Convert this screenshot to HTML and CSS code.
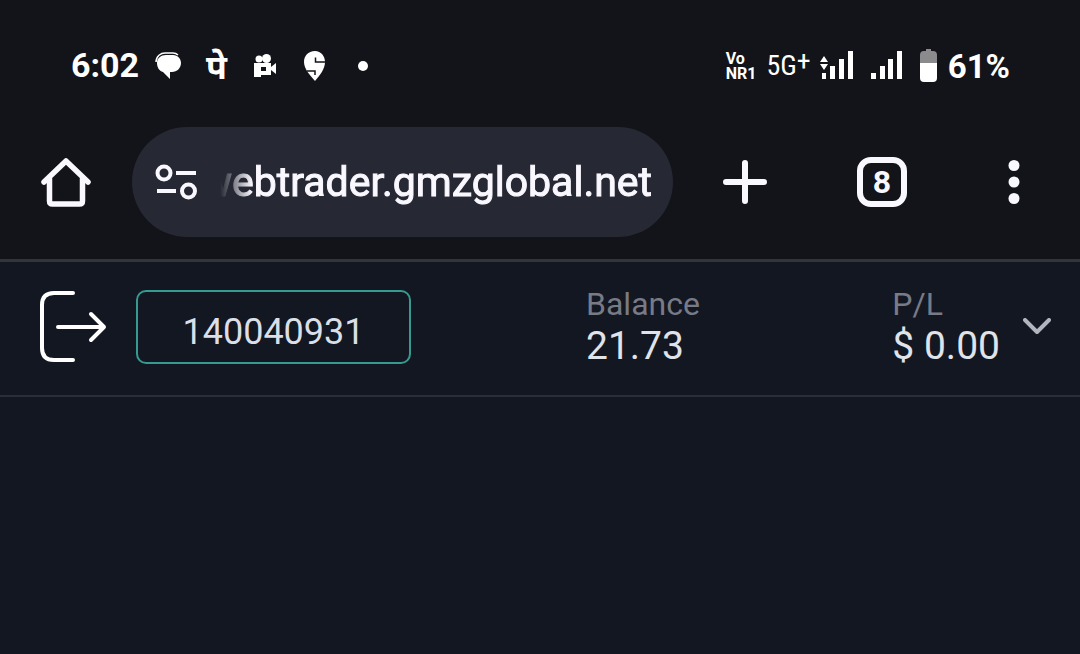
FILE: index.html
```html
<!DOCTYPE html>
<html lang="en">
<head>
<meta charset="utf-8">
<meta name="viewport" content="width=device-width, initial-scale=1">
<title>Webtrader</title>
<link rel="stylesheet" href="styles.css">
</head>
<body>
<div class="status-bar">
  <div class="status-left">
    <time class="clock">6:02</time>
    <svg class="icon-chat" width="27" height="27" viewBox="0 0 27 27" aria-hidden="true">
      <path d="M1 10C1 4 6 1 10 1h8c2 0 4 1 5 2" fill="none" stroke="#fff" stroke-width="1.500"/>
      <path d="M11 3h7c5 0 8 4 8 8 0 5-4 9-9 9h-2v7l-7-7C4 19 2 15 2 11c0-5 4-8 9-8z" fill="#fff"/>
    </svg>
    <span class="pay-mark">पे</span>
    <svg class="icon-camera" width="23" height="23" viewBox="0 0 23 23" aria-hidden="true">
      <circle cx="5" cy="5" r="3.500" fill="#fff"/><circle cx="12.500" cy="4.500" r="4.500" fill="#fff"/>
      <path fill="#fff" fill-rule="evenodd" d="M0 9h17v4l5-4v11l-5-4v5H7v2H0zM7 13v4h5v-4z"/>
    </svg>
    <svg class="icon-pin" width="22" height="30" viewBox="0 0 22 30" aria-hidden="true">
      <path fill="#fff" d="M11 0C4 0 0 5 0 11c0 7 6 13 11 19 5-6 10-12 10-19C21 5 17 0 11 0z"/>
      <path d="M11.500 6.500V11H22M3 20h8v4" stroke="#131419" stroke-width="1.500" fill="none"/>
    </svg>
    <span class="more-dot"></span>
  </div>
  <div class="status-right">
    <span class="vonr"><span>Vo</span><span>NR1</span></span>
    <span class="network">5G<sup>+</sup></span>
    <svg class="signal-one" width="33" height="29" viewBox="0 0 33 29" fill="#fff" aria-hidden="true">
      <path d="M0 11l4-6 4 6zM0 13h8l-4 6zM2 22h4v6H2zM10 15h5v13h-5zM19 8h5v20h-5zM28 0h5v28h-5z"/>
    </svg>
    <svg class="signal-two" width="31" height="29" viewBox="0 0 31 29" fill="#fff" aria-hidden="true">
      <path d="M0 22h5v6H0zM9 15h5v13H9zM17 8h5v20h-5zM26 0h5v28h-5z"/>
    </svg>
    <svg class="battery" width="17" height="33" viewBox="0 0 17 33" aria-hidden="true">
      <path d="M6 0h5v2h2q4 0 4 4v8H0V6q0-4 4-4h2z" fill="#8b8b8e"/><path d="M0 14h17v15q0 4-4 4H4q-4 0-4-4z" fill="#fff"/>
    </svg>
    <span class="percent">61%</span>
  </div>
</div>

<div class="toolbar">
  <button class="icon-button home" aria-label="Home">
    <svg width="50" height="50" viewBox="0 0 50 50" fill="none" stroke="#faf8ff" stroke-width="5.500" stroke-linecap="round" stroke-linejoin="round">
      <path d="M3 25L25 4l22 21"/><path d="M8.500 22v22q0 3 3 3h27q3 0 3-3V22"/>
    </svg>
  </button>
  <div class="address-bar">
    <button class="icon-button site-info" aria-label="Site information">
      <svg width="42" height="36" viewBox="0 0 42 36" fill="none" stroke="#faf8ff" stroke-width="4">
        <circle cx="9" cy="9" r="6.500"/><circle cx="33.500" cy="27" r="6.500"/><path d="M21 9h20M2 27h19"/>
      </svg>
    </button>
    <input class="url" type="text" aria-label="Address" value="webtrader.gmzglobal.net">
  </div>
  <button class="icon-button new-tab" aria-label="New tab">
    <svg width="44" height="44" viewBox="0 0 44 44" fill="none" stroke="#faf8ff" stroke-width="6" stroke-linecap="round"><path d="M22 3v38M3 22h38"/></svg>
  </button>
  <button class="tabs" aria-label="8 open tabs">8</button>
  <button class="icon-button menu" aria-label="Menu">
    <svg width="12" height="44" viewBox="0 0 12 44" fill="#faf8ff"><circle cx="6" cy="5.500" r="5.500"/><circle cx="6" cy="22" r="5.500"/><circle cx="6" cy="38.500" r="5.500"/></svg>
  </button>
</div>

<header class="account-bar">
  <button class="icon-button" aria-label="Log out">
    <svg width="67" height="72" viewBox="0 0 67 72" fill="none" stroke="#fff" stroke-width="4" stroke-linecap="round" stroke-linejoin="round">
      <path d="M33 2H14Q2 2 2 14v43q0 12 12 12h19M18 36h46M51 23l13 13-13 13"/>
    </svg>
  </button>
  <button class="account">140040931</button>
  <dl class="stats">
    <div><dt>Balance</dt><dd>21.73</dd></div>
    <div><dt>P/L</dt><dd>$ 0.00</dd></div>
  </dl>
  <button class="icon-button" aria-label="Show details">
    <svg width="28" height="18" viewBox="0 0 28 18" fill="none" stroke="#b2b5be" stroke-width="4" stroke-linecap="round" stroke-linejoin="round"><path d="M2 2l12 12L26 2"/></svg>
  </button>
</header>
<main class="workspace"></main>
</body>
</html>
```
FILE: styles.css
```css
* { box-sizing: border-box; }
body {
  margin: 0;
  min-height: 100vh;
  display: flex;
  flex-direction: column;
  background: #131722;
  color: #fff;
  font-family: Roboto, sans-serif;
}
button, input { font: inherit; color: inherit; }
svg { display: block; flex: none; }
.icon-button { padding: 0; border: 0; background: none; flex: none; }

.status-bar {
  display: flex;
  justify-content: space-between;
  align-items: center;
  height: 127px;
  padding: 4px 70px 0 71px;
  background: #131419;
}
.status-left, .status-right { display: flex; align-items: center; }
.clock { padding-bottom: 2px; font-size: 34px; font-weight: 700; line-height: 40px; }
.icon-chat { margin-left: 16px; }
.pay-mark {
  margin-left: 24px;
  padding-top: 10px;
  font: 700 34px/40px "Noto Sans Devanagari", "Noto Sans", sans-serif;
}
.icon-camera { margin-left: 27px; }
.icon-pin { margin-left: 27px; }
.more-dot { width: 10px; height: 10px; margin-left: 32px; border-radius: 50%; background: #fff; }
.vonr {
  display: flex;
  flex-direction: column;
  font-size: 16px;
  font-weight: 700;
  line-height: 15px;
}
.network {
  margin-left: 10px;
  font: 28px/34px "Roboto Condensed", "Liberation Sans Narrow", Roboto, sans-serif;
}
.network sup { font-size: 28px; line-height: 0; vertical-align: 5px; }
.signal-one { margin-left: 9px; }
.signal-two { margin-left: 18px; }
.battery { margin-left: 18px; }
.percent { margin-left: 11px; padding-top: 2px; font-size: 33px; font-weight: 700; line-height: 40px; }

.toolbar {
  display: flex;
  align-items: center;
  padding: 0 60px 22px 41px;
  background: #131419;
  border-bottom: 3px solid #33353a;
}
.address-bar {
  flex: 1;
  min-width: 0;
  display: flex;
  align-items: center;
  height: 110px;
  margin-left: 41px;
  padding: 0 21px 0 23px;
  border-radius: 55px;
  background: #262833;
}
.url {
  flex: 1;
  min-width: 0;
  height: 60px;
  margin-left: 23px;
  padding: 0;
  border: 0;
  outline: 0;
  background: none;
  color: #faf8ff;
  direction: rtl;
  font-size: 41px;
  -webkit-mask-image: linear-gradient(to right, transparent, #000 32px);
  mask-image: linear-gradient(to right, transparent, #000 32px);
  -webkit-text-stroke: 1px #faf8ff;
}
.new-tab { margin-left: 50px; }
.tabs {
  flex: none;
  width: 50px;
  height: 50px;
  margin-left: 90px;
  padding: 0;
  border: 6px solid #faf8ff;
  border-radius: 14px;
  background: none;
  color: #faf8ff;
  font-size: 32px;
  font-weight: 700;
  line-height: 38px;
}
.menu { margin-left: 101px; }

.account-bar {
  display: flex;
  align-items: center;
  padding: 21px 29px 24px 40px;
  border-bottom: 2px solid #2a2e39;
}
.account {
  width: 275px;
  height: 74px;
  margin-left: 29px;
  padding: 10px 0 0;
  border: 2px solid #369a91;
  border-radius: 10px;
  background: none;
  color: #dbdfe7;
  font-size: 36px;
}
.stats {
  flex: 1;
  display: flex;
  justify-content: space-between;
  margin: 0;
  padding: 0 23px 4px 175px;
}
.stats dt { color: #787b86; font-size: 32px; line-height: 42px; }
.stats dd { margin: 0; color: #e0e4ea; font-size: 39px; line-height: 42px; }
.workspace { flex: 1; }
```
